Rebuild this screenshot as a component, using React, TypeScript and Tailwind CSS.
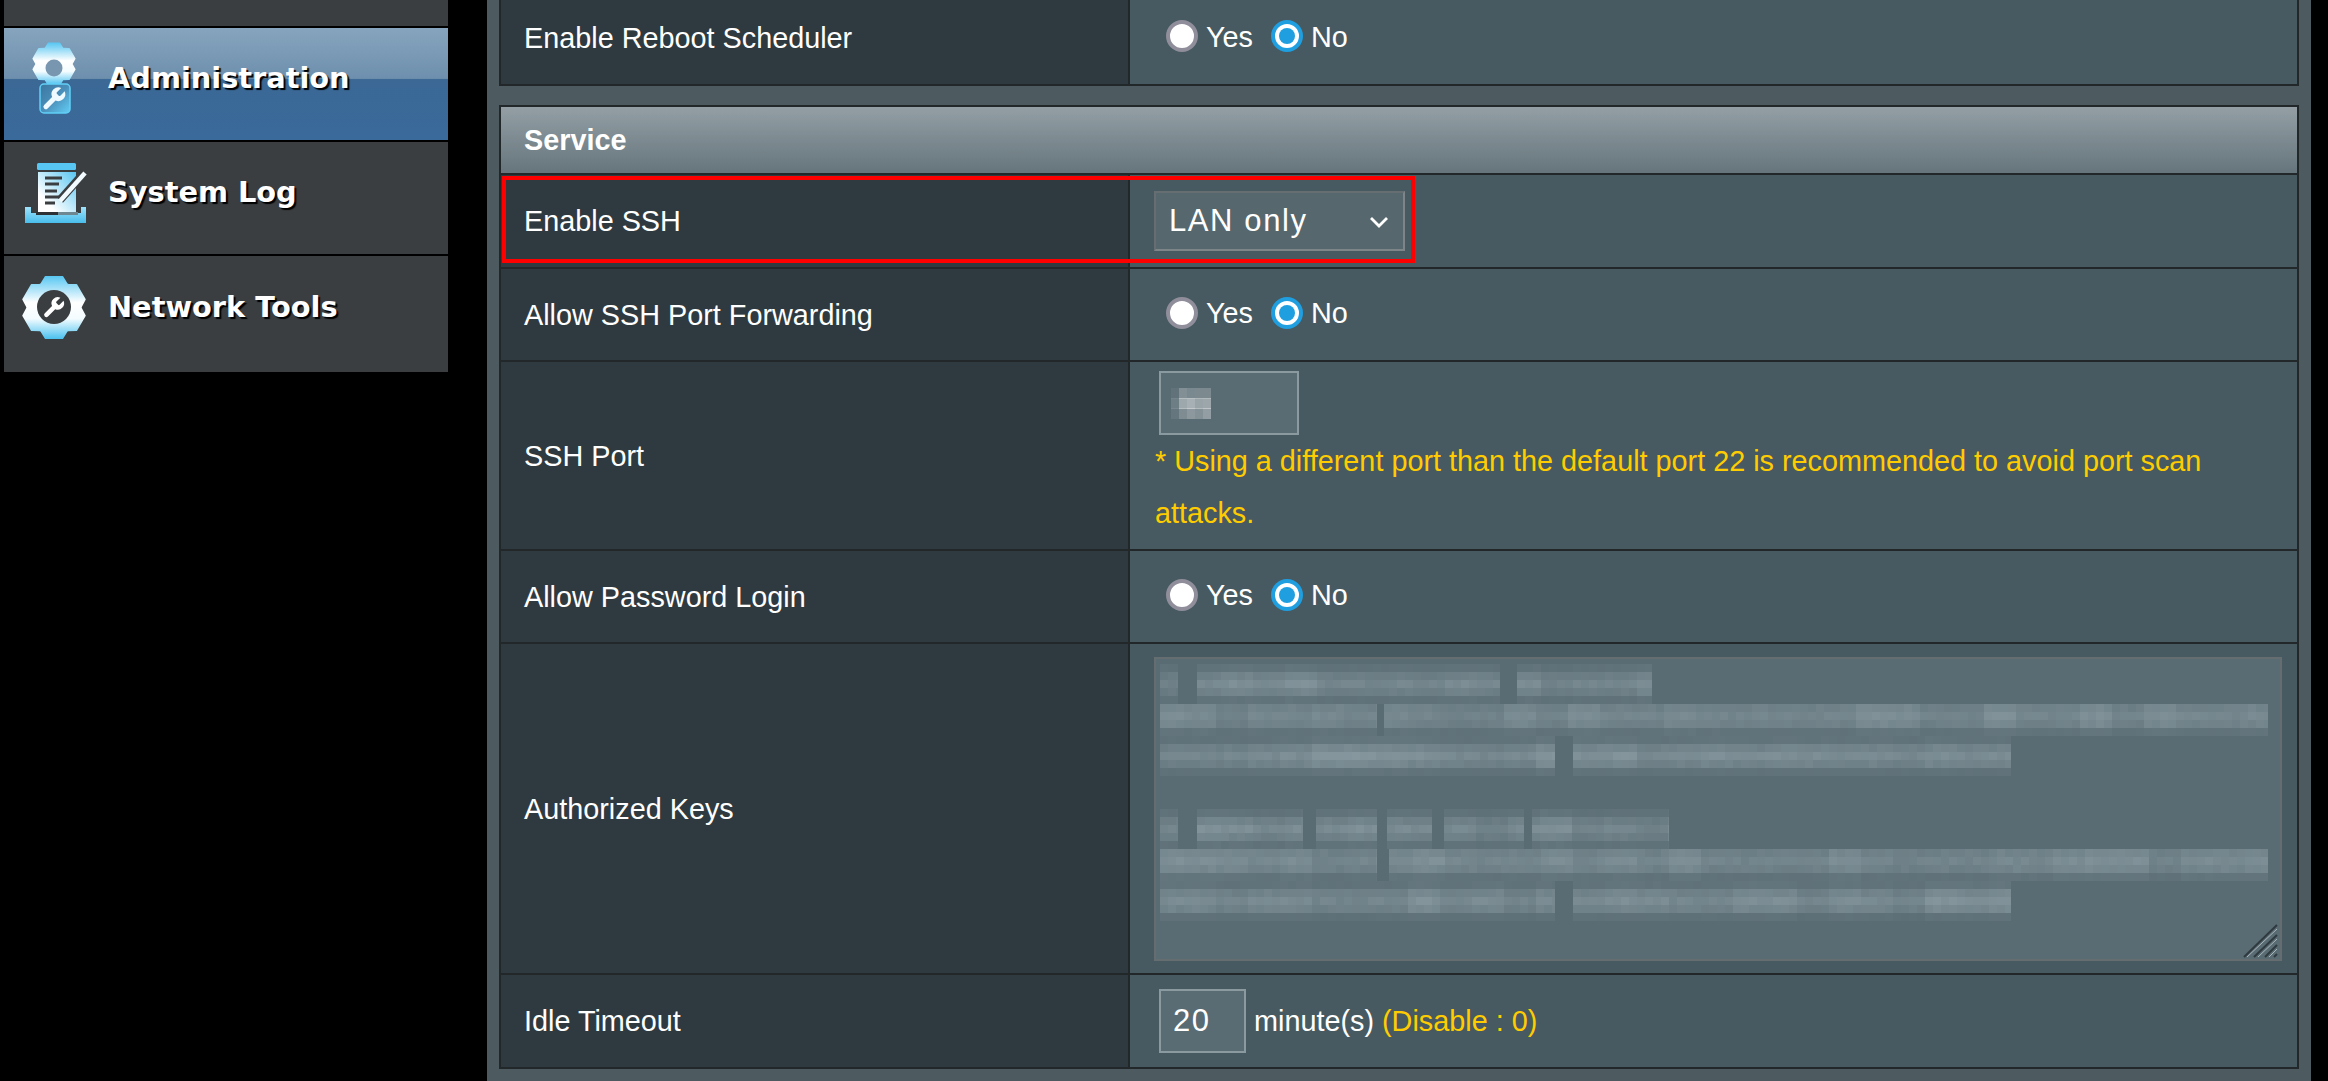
import type { ReactNode } from 'react'

const wrench =
  'M14.7 6.3a1 1 0 0 0 0 1.4l1.6 1.6a1 1 0 0 0 1.4 0l3.77-3.77a6 6 0 0 1-7.94 7.94l-6.91 6.91a2.12 2.12 0 0 1-3-3l6.91-6.91a6 6 0 0 1 7.94-7.94l-3.76 3.76z'

// 6 tooth gear, one tooth straight up
const gearPath = (cx: number, cy: number, outer: number, inner: number) => {
  const pts: string[] = []
  for (let i = 0; i < 6; i++) {
    const a = (i * Math.PI) / 3 - Math.PI / 2
    const steps: [number, number][] = [
      [-0.5, inner],
      [-0.27, outer],
      [0.27, outer],
      [0.5, inner],
    ]
    steps.forEach(([d, r]) => {
      pts.push(`${(cx + Math.cos(a + d) * r).toFixed(1)} ${(cy + Math.sin(a + d) * r).toFixed(1)}`)
    })
  }
  return 'M' + pts.join('L') + 'Z'
}

const Defs = ({ id }: { id: string }) => (
  <defs>
    <linearGradient id={id} x1="0" y1="0" x2="0" y2="1">
      <stop offset="0" stopColor="#5cc8f2" />
      <stop offset="0.42" stopColor="#ffffff" />
      <stop offset="0.68" stopColor="#f4fcff" />
      <stop offset="1" stopColor="#4fc3f0" />
    </linearGradient>
  </defs>
)

const AdminIcon = () => (
  <svg viewBox="4 28 104 112" className="w-[104px] h-[112px] shrink-0">
    <Defs id="adminGrad" />
    <defs>
      <linearGradient id="boxGrad" x1="0" y1="0" x2="1" y2="1">
        <stop offset="0" stopColor="#3b769f" />
        <stop offset="0.5" stopColor="#4a8fba" />
        <stop offset="1" stopColor="#62cff6" />
      </linearGradient>
    </defs>
    <path d={gearPath(54, 64, 21.5, 18)} fill="url(#adminGrad)" stroke="url(#adminGrad)" strokeWidth="1.5" strokeLinejoin="round" />
    <circle cx="54" cy="68" r="8.5" fill="#7896b0" />
    <rect x="40" y="84" width="30" height="29" rx="4" fill="url(#boxGrad)" stroke="#62cff6" strokeWidth="1.5" />
    <g transform="translate(40 85) scale(1.15)">
      <path d={wrench} fill="#eefaff" />
    </g>
  </svg>
)

const LogIcon = () => (
  <svg viewBox="4 142 104 112" className="w-[104px] h-[112px] shrink-0">
    <defs>
      <linearGradient id="logGrad" x1="1" y1="0" x2="0" y2="1">
        <stop offset="0" stopColor="#58c6f2" />
        <stop offset="0.75" stopColor="#ffffff" />
      </linearGradient>
      <linearGradient id="trayGrad" x1="0" y1="0" x2="0" y2="1">
        <stop offset="0" stopColor="#9fe2fb" />
        <stop offset="1" stopColor="#49bdec" />
      </linearGradient>
    </defs>
    <rect x="37" y="163" width="39" height="7" rx="1.5" fill="#58c6f2" />
    <rect x="38" y="172" width="38" height="42" fill="url(#logGrad)" />
    <path d="M45 178h17M45 184h14M45 191h12M45 197h17M45 203h10" stroke="#3a3e41" strokeWidth="3" fill="none" />
    <path d="M84 173L60 200" stroke="#3a3e41" strokeWidth="8" fill="none" />
    <path d="M85 173L60 201" stroke="#f2fbff" strokeWidth="4.5" fill="none" />
    <path d="M25 207h6v6h50v-6h5v16H25z" fill="url(#trayGrad)" />
    <rect x="36" y="212" width="22" height="3" fill="#2d3134" />
    <rect x="58" y="212" width="20" height="3" fill="#6f8791" />
  </svg>
)

const ToolsIcon = () => (
  <svg viewBox="4 256 104 116" className="w-[104px] h-[116px] shrink-0">
    <Defs id="toolsGrad" />
    <path d={gearPath(54, 307.5, 32, 27)} fill="url(#toolsGrad)" stroke="url(#toolsGrad)" strokeWidth="1.5" strokeLinejoin="round" />
    <circle cx="54" cy="307" r="17" fill="#3a3e41" />
    <g transform="translate(41 295) scale(1.05)">
      <path d={wrench} fill="#ffffff" />
    </g>
  </svg>
)

const SideItem = ({
  label,
  icon,
  active,
  height,
  pad,
}: {
  label: string
  icon: ReactNode
  active?: boolean
  height: string
  pad: string
}) => (
  <div
    className={`flex items-start ${height} ${
      active
        ? 'bg-[linear-gradient(180deg,#87a4bd_0%,#6e90ae_45%,#3b6895_46%,#3a6a9b_100%)]'
        : 'bg-[#3a3e41]'
    }`}
  >
    {icon}
    <span className={`${pad} font-['DejaVu_Sans',sans-serif] font-bold text-[28.8px] leading-[34px] text-white [text-shadow:2px_2px_1px_#000]`}>
      {label}
    </span>
  </div>
)

const Sidebar = () => (
  <aside className="ml-1 w-[444px] shrink-0 flex flex-col gap-[2px]">
    <div className="h-[26px] bg-[#3a3e41]" />
    <SideItem label="Administration" icon={<AdminIcon />} active height="h-[112px]" pad="pt-[33px]" />
    <SideItem label="System Log" icon={<LogIcon />} height="h-[112px]" pad="pt-[33px]" />
    <SideItem label="Network Tools" icon={<ToolsIcon />} height="h-[116px]" pad="pt-[34px]" />
  </aside>
)

const RadioPair = () => (
  <div className="flex items-center -mt-1 pl-9 text-[28.8px] text-white">
    <div className="w-8 h-8 rounded-full border-4 border-[#8f8e9a] bg-white" />
    <span className="ml-2 mr-[18px] mt-[3px]">Yes</span>
    <div className="w-8 h-8 rounded-full border-4 border-[#1f9ee0] bg-white flex items-center justify-center">
      <div className="w-4 h-4 rounded-full bg-[#1f9ee0]" />
    </div>
    <span className="ml-2 mt-[3px]">No</span>
  </div>
)

const Row = ({
  label,
  height,
  last,
  top,
  children,
}: {
  label: string
  height: string
  last?: boolean
  top?: boolean
  children: ReactNode
}) => (
  <div className={`relative flex ${height} ${last ? '' : 'border-b-2 border-[#222829]'}`}>
    <div className="w-[629px] shrink-0 flex items-center pl-[23px] pt-[2px] bg-[#2f3a40] border-r-2 border-[#222829] text-[28.8px] text-white">
      {label}
    </div>
    <div className={`flex-1 min-w-0 bg-[#475a61] flex flex-col ${top ? 'justify-start' : 'justify-center'}`}>{children}</div>
  </div>
)

// pixelated (censored) text blocks, page coordinates
type Segment = [number, number]
type Line = { top: number; rows: number[]; segs: Segment[] }

const lines: Line[] = [
  { top: 663, rows: [0.22, 0.6, 0.85, 0.6, 0.22], segs: [[1160, 1178], [1197, 1500], [1517, 1652]] },
  { top: 703, rows: [0.7, 0.85, 0.7, 0.25], segs: [[1160, 1377], [1384, 2268]] },
  { top: 735, rows: [0.25, 0.7, 0.95, 0.7, 0.22], segs: [[1160, 1555], [1573, 2011]] },
  { top: 808, rows: [0.22, 0.6, 0.85, 0.6, 0.22], segs: [[1160, 1178], [1197, 1303], [1316, 1377], [1387, 1432], [1444, 1524], [1532, 1669]] },
  { top: 848, rows: [0.7, 0.85, 0.7, 0.25], segs: [[1160, 1377], [1389, 2268]] },
  { top: 880, rows: [0.25, 0.7, 0.9, 0.7, 0.18], segs: [[1160, 1555], [1573, 2011]] },
]

const noise = (x: number, y: number) => {
  const s = Math.sin(x * 12.9898 + y * 78.233) * 43758.5453
  return s - Math.floor(s)
}

const Mosaic = () => {
  const cells: ReactNode[] = []
  lines.forEach((line) => {
    line.rows.forEach((level, r) => {
      const y = line.top + r * 8
      line.segs.forEach(([a, b]) => {
        for (let x = a; x < b; x += 8) {
          // broad patches so neighbouring blocks stay close in tone
          const patch = noise(Math.floor(x / 32), line.top)
          const alpha = level * (0.2 + patch * 0.14 + noise(x, y) * 0.06)
          cells.push(
            <rect key={`${x}-${y}`} x={x} y={y} width={Math.min(8, b - x)} height="8" fill="#d5e4e8" fillOpacity={alpha} />,
          )
        }
      })
    })
  })
  return (
    <svg viewBox="1156 658 1124 300" className="absolute inset-0 w-full h-full" shapeRendering="crispEdges">
      {cells}
    </svg>
  )
}

const PortMosaic = () => {
  const cols = [0.15, 0.45, 0.55, 0.45, 0.5]
  const rowsA = [0.35, 0.75, 0.5]
  return (
    <svg viewBox="0 0 40 32" className="absolute left-[10px] top-[15px] w-[40px] h-[32px]" shapeRendering="crispEdges">
      {rowsA.map((r, j) =>
        cols.map((c, i) => (
          <rect key={`${i}-${j}`} x={i * 8} y={j * 10} width="8" height="11" fill="#ffffff" fillOpacity={c * r + noise(i, j) * 0.1} />
        )),
      )}
    </svg>
  )
}

const ResizeGrip = () => (
  <svg viewBox="0 0 36 34" className="absolute right-[1px] bottom-[1px] w-[36px] h-[34px]" fill="none">
    <g stroke="#2f3a3f" strokeWidth="2">
      <path d="M1 33L34 1" />
      <path d="M11 33L34 11" />
      <path d="M22 33L34 21" />
      <path d="M31 33L34 30" />
    </g>
    <g stroke="#a9b6ba" strokeWidth="1">
      <path d="M4 33L34 5" />
      <path d="M15 33L34 15" />
      <path d="M26 33L34 25" />
    </g>
  </svg>
)

const App = () => {
  return (
    <div className="flex w-[2328px] h-[1081px] overflow-hidden bg-black font-['Liberation_Sans',Arial,sans-serif]">
      <Sidebar />
      <main className="ml-[39px] w-[1824px] h-full shrink-0 bg-[#4d5a60] px-3">
        <div className="-mt-2 border-x-2 border-b-2 border-[#222829]">
          <Row label="Enable Reboot Scheduler" height="h-[92px]" last>
            <RadioPair />
          </Row>
        </div>

        <div className="mt-[19px] border-2 border-[#222829]">
          <div className="h-[66px] flex items-center pl-[23px] pt-[2px] bg-[linear-gradient(180deg,#939fa5_0%,#66757c_100%)] text-[28.8px] font-bold text-white">
            Service
          </div>
          <div className="h-[2px] bg-[#222829]" />
          <Row label="Enable SSH" height="h-[94px]">
            <div className="ml-6 w-[251px] h-[60px] flex items-center justify-between pl-[13px] pr-[14px] bg-[#56676e] border-2 border-t-[#666e72] border-l-[#666e72] border-r-[#7d8589] border-b-[#7d8589] text-[31px] tracking-[1.6px] text-white">
              <span>LAN only</span>
              <svg viewBox="0 0 20 12" className="w-[20px] h-[12px] mt-[2px]" fill="none" stroke="#ffffff" strokeWidth="2.8">
                <path d="M2 2l8 8 8-8" />
              </svg>
            </div>
            <div className="absolute left-[1px] top-[1px] w-[913px] h-[87px] border-4 border-[#f00]" />
          </Row>
          <Row label="Allow SSH Port Forwarding" height="h-[93px]">
            <RadioPair />
          </Row>
          <Row label="SSH Port" height="h-[189px]" top>
            <div className="pl-[25px] pt-[9px] pr-2">
              <div className="relative ml-1 w-[140px] h-[64px] bg-[#596b73] border-2 border-[#8b9a9f]">
                <PortMosaic />
              </div>
              <p className="text-[28.8px] leading-[52px] text-[#ffcc00]">
                * Using a different port than the default port 22 is recommended to avoid port scan attacks.
              </p>
            </div>
          </Row>
          <Row label="Allow Password Login" height="h-[93px]">
            <RadioPair />
          </Row>
          <Row label="Authorized Keys" height="h-[331px]">
            <div className="relative ml-6 w-[1128px] h-[304px] bg-[#596b73] border-2 border-[#666d70]">
              <Mosaic />
              <ResizeGrip />
            </div>
          </Row>
          <Row label="Idle Timeout" height="h-[92px]" last>
            <div className="flex items-center pl-[29px] pt-[2px] text-[28.8px] text-white">
              <div className="w-[87px] h-[64px] -mt-[2px] flex items-center pl-[12px] bg-[#596b73] border-2 border-[#8b9a9f] text-[31px] tracking-[1.6px]">
                20
              </div>
              <span className="ml-2">minute(s)</span>
              <span className="ml-2 text-[#ffcc00]">(Disable : 0)</span>
            </div>
          </Row>
        </div>
      </main>
    </div>
  )
}

export default App
